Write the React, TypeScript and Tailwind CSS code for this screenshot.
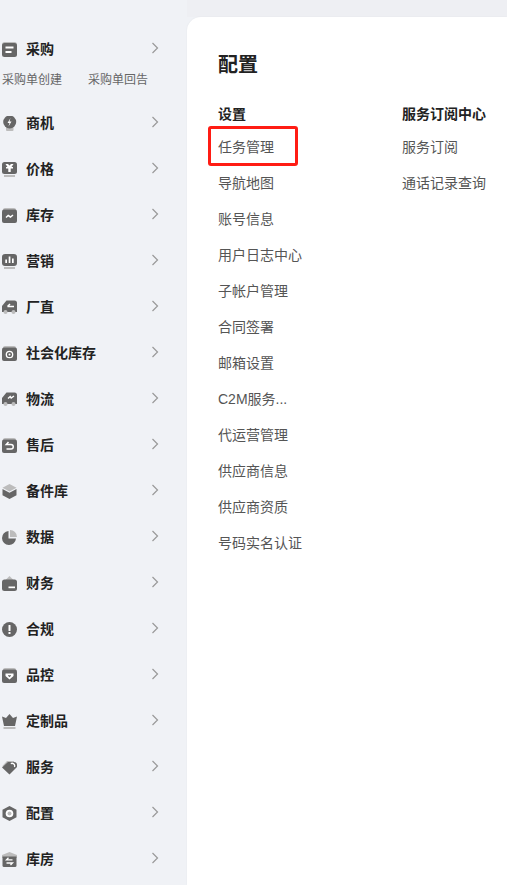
import React from "react";

const D = "#666666";
const L = "#bcbcbc";

const icons: Record<string, React.ReactNode> = {
  采购: (<><rect x="0" y="0" width="15" height="5" rx="2.500" fill={L} /><rect x="0" y="1" width="15" height="14" rx="2.500" fill={D} /><rect x="3.500" y="4.500" width="8" height="2" fill="#fff" /><rect x="3.500" y="9" width="6" height="2" fill="#fff" /></>),
  商机: (<><rect x="4" y="10" width="7.500" height="5" rx="1" fill={L} /><circle cx="7.700" cy="6" r="6.500" fill={D} /><path d="M8.500 2 5.500 7h2l-1 3.500 3-5h-2z" fill="#fff" /></>),
  价格: (<><rect x="2" y="13" width="11" height="2" fill={L} /><rect x="0" y="0" width="15" height="12" rx="2.500" fill={D} /><path d="M3.500 2h2.500l1.500 1.500L9 2h2.500L9.500 5H11v1.500H8.700V10H6.300V6.500H4V5h1.500z" fill="#fff" /></>),
  库存: (<><rect x="1" y="0" width="13" height="4" rx="2" fill={L} /><rect x="0" y="1.500" width="15" height="13.500" rx="2" fill={D} /><path d="m4 9.500 2.200-2 2.300 1.500 2.500-2" stroke="#fff" strokeWidth="1.500" fill="none" /></>),
  营销: (<><rect x="2" y="13" width="11" height="2" fill={L} /><rect x="0" y="0" width="15" height="12" rx="3" fill={D} /><rect x="3.300" y="5.500" width="1.700" height="3.500" fill="#fff" /><rect x="6.700" y="2.500" width="1.700" height="6.500" fill="#fff" /><rect x="10" y="4.500" width="1.700" height="4.500" fill="#fff" /></>),
  厂直: (<><path d="M4.500 .5h8a2.500 2.500 0 0 1 2.500 2.500v9H0V6z" fill={D} /><circle cx="3.500" cy="12" r="2" fill={L} /><circle cx="11.500" cy="12" r="2" fill={L} /><path d="M12 6.500H5.500M5.500 6.500l2.500-2.500" stroke="#fff" strokeWidth="1.500" fill="none" /></>),
  社会化库存: (<><rect x="1" y="0" width="13" height="4" rx="2" fill={L} /><rect x="0" y="1.500" width="15" height="13.500" rx="2" fill={D} /><circle cx="7.500" cy="8.500" r="3.200" fill="none" stroke="#fff" strokeWidth="1.300" /><circle cx="7.500" cy="8.500" r="1" fill="#fff" /></>),
  物流: (<><path d="M4.500 .5h8a2.500 2.500 0 0 1 2.500 2.500v9H0V6z" fill={D} /><circle cx="3.500" cy="12" r="2" fill={L} /><circle cx="11.500" cy="12" r="2" fill={L} /><path d="m6 6.500 2.200-2 1 1.500 2.800-2" stroke="#fff" strokeWidth="1.400" fill="none" /></>),
  售后: (<><rect x="1" y="0" width="13" height="4" rx="2" fill={L} /><rect x="0" y="1.500" width="15" height="13.500" rx="2" fill={D} /><path d="M6.500 4 4.300 6.500H9a2.200 2.200 0 0 1 0 4.500H4.500" stroke="#fff" strokeWidth="1.500" fill="none" /></>),
  备件库: (<><path d="M7.500 0 14.500 3.700 7.500 7.500 .5 3.700z" fill={L} /><path d="M.5 5l7 3.800 7-3.800v6.300L7.500 15 .5 11.300z" fill={D} /></>),
  数据: (<><path d="M6.500 1a7 7 0 1 0 7.500 7.500H6.500z" fill={D} /><path d="M8 0a7 7 0 0 1 7 7H8z" fill={L} /></>),
  财务: (<><path d="M2.500 5 7.500 0 12.500 5z" fill={L} /><rect x="0" y="3.500" width="15" height="11.500" rx="2.500" fill={D} /><rect x="6.500" y="10.500" width="6.500" height="1.700" fill="#fff" /></>),
  合规: (<><circle cx="7.500" cy="7.500" r="7.500" fill={D} /><rect x="6.500" y="3" width="2" height="6" rx=".5" fill="#fff" /><rect x="6.500" y="10" width="2" height="2" fill="#fff" /></>),
  品控: (<><rect x="1" y="0" width="13" height="4" rx="2" fill={L} /><rect x="0" y="1.500" width="15" height="13.500" rx="2" fill={D} /><path d="M3.500 5.500h8v2.500l-4 3.500-4-3.500z" fill="#fff" /><path d="M6 7.200h3v.6L7.500 9.200 6 7.800z" fill={D} /></>),
  定制品: (<><rect x="1.500" y="13" width="12" height="2" fill={L} /><path d="M7.500 0 11 4l4-1.500-2 9.500H2L0 2.500 4 4z" fill={D} /></>),
  服务: (<><path d="M0 6.500 5 1h7v5z" fill={L} /><path d="M6 2h6a3 3 0 0 1 3 3v2L7.500 14.500 0 7.500z" fill={D} /><path d="M8.800 3.600a2.600 2.600 0 0 1 3.600 3.400" stroke="#fff" strokeWidth="1.300" fill="none" /></>),
  配置: (<><path d="M7.500 0 14.500 3.800v7.400L7.500 15 .5 11.200V3.800z" fill={D} /><circle cx="7.500" cy="7.500" r="3.800" fill="#fff" /><circle cx="7.500" cy="7.500" r="2" fill={L} /></>),
  库房: (<><path d="M7.500 0 15 3v3H0V3z" fill={L} /><path d="M.5 4.500h14v9A1.500 1.500 0 0 1 13 15H2a1.500 1.500 0 0 1-1.500-1.500z" fill={D} /><path d="M10.500 7.800h-6l2-2M4.500 11h6l-2 2" stroke="#fff" strokeWidth="1.300" fill="none" /></>),
};

const nav = ["商机","价格","库存","营销","厂直","社会化库存","物流","售后","备件库","数据","财务","合规","品控","定制品","服务","配置","库房"];

function NavRow({ label }: { label: string }) {
  return (
    <div className="flex h-[46px] items-center">
      <svg width="15" height="15" viewBox="0 0 15 15" className="ml-[2px] shrink-0">{icons[label]}</svg>
      <span className="ml-[9px] text-[14px] font-bold text-[#222222]">{label}</span>
      <svg width="8" height="12" viewBox="0 0 8 12" className="absolute left-[151px] -mt-[2px]">
        <path d="m1.500 1 5 5-5 5" fill="none" stroke="#999999" strokeWidth="1.200" />
      </svg>
    </div>
  );
}

const col1 = ["任务管理","导航地图","账号信息","用户日志中心","子帐户管理","合同签署","邮箱设置","C2M服务...","代运营管理","供应商信息","供应商资质","号码实名认证"];
const col2 = ["服务订阅","通话记录查询"];

function Column({ title, items, width }: { title: string; items: string[]; width: string }) {
  return (
    <div className={width}>
      <div className="flex h-[20px] items-center text-[14px] font-bold text-[#222222]">{title}</div>
      <div className="mt-[5px] flex flex-col">
        {items.map((t) => (
          <div key={t} className="flex h-[36px] items-center text-[14px] text-[#555555]">{t}</div>
        ))}
      </div>
    </div>
  );
}

export default function App() {
  return (
    <div className="relative flex h-[885px] w-[507px] overflow-hidden bg-[#f0f2f6] font-['Liberation_Sans','Noto_Sans_CJK_SC',sans-serif]">
      <aside className="relative w-[187px] shrink-0 pt-[26px]">
        <NavRow label="采购" />
        <div className="flex h-[28px] pb-[13px] pl-[2px] pt-[1px] text-[12px] leading-[14px] text-[#666666]">
          <span className="w-[86px]">采购单创建</span>
          <span>采购单回告</span>
        </div>
        {nav.map((l) => <NavRow key={l} label={l} />)}
      </aside>
      <div className="flex flex-1 flex-col">
        <div className="h-[17px] bg-[#eeeff3]" />
        <main className="relative flex-1 rounded-tl-[14px] bg-white pl-[31px] pt-[34px] shadow-[0_0_2px_rgba(0,0,0,0.06)]">
          <h1 className="flex h-[28px] items-center text-[20px] font-bold text-[#222222]">配置</h1>
          <div className="mt-[25px] flex">
            <Column title="设置" items={col1} width="w-[184px]" />
            <Column title="服务订阅中心" items={col2} width="w-[100px]" />
          </div>
          <div className="absolute left-[21px] top-[109px] h-[40px] w-[90px] rounded-[3px] border-[3px] border-[#ff1c14]" />
        </main>
      </div>
    </div>
  );
}
